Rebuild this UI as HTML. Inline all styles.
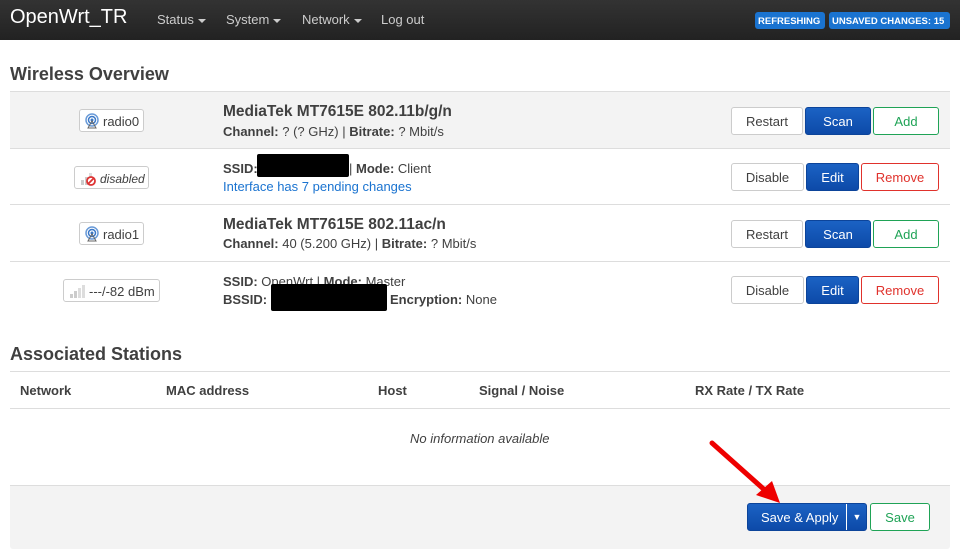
<!DOCTYPE html>
<html><head><meta charset="utf-8"><style>
*{box-sizing:border-box;margin:0;padding:0}
body{width:960px;height:560px;background:#fff;font-family:"Liberation Sans",sans-serif;color:#404040;font-size:13px;position:relative;overflow:hidden}
.a{position:absolute}
.nav{left:0;top:0;width:960px;height:40px;background:linear-gradient(#333,#222)}
.brand{left:10px;top:6px;color:#fff;font-size:20px}
.mi{top:12px;color:#ccc;font-size:13px}
.car{display:inline-block;width:0;height:0;border-left:4px solid transparent;border-right:4px solid transparent;border-top:4px solid #ccc;vertical-align:middle;margin-left:4px}
.badge{top:12px;height:17px;background:#1a73d0;color:#fff;font-size:9.5px;font-weight:bold;border-radius:3px;padding:4px 3px 0;white-space:nowrap}
h2{position:absolute;font-size:18px;font-weight:bold;color:#404040}
.row{left:10px;width:940px;border-top:1px solid #ddd}
.lbl{height:23px;border:1px solid #ccc;border-radius:3px;background:#fff;font-size:13px;padding:3px 4px 0 4px;white-space:nowrap}
.lbl svg{vertical-align:-3px;margin-right:3px}
.btn{height:28px;border-radius:3px;font-size:13px;text-align:center;padding-top:6px;border:1px solid #ccc;background:#fff;color:#404040}
.pri{background:linear-gradient(#1b62c4,#0d4aa8);border-color:#0c449a;color:#fff}
.pos{border-color:#1fa356;color:#1fa356}
.neg{border-color:#e0322c;color:#e0322c}
b{color:#404040}
.t{font-size:15.5px;font-weight:bold;color:#404040}
.th{font-weight:bold;top:383px;font-size:13px}
</style></head><body>
<div class="a nav"></div>
<div class="a brand">OpenWrt_TR</div>
<div class="a mi" style="left:157px">Status<span class="car"></span></div>
<div class="a mi" style="left:226px">System<span class="car"></span></div>
<div class="a mi" style="left:302px">Network<span class="car"></span></div>
<div class="a mi" style="left:381px">Log out</div>
<div class="a badge" style="left:755px;width:70px">REFRESHING</div>
<div class="a badge" style="left:829px;width:121px">UNSAVED CHANGES: 15</div>

<h2 style="left:10px;top:64px">Wireless Overview</h2>
<div class="a row" style="top:91px;height:58px;background:#f3f3f3"></div>
<div class="a row" style="top:148px;height:57px"></div>
<div class="a row" style="top:204px;height:58px"></div>
<div class="a row" style="top:261px;height:57px"></div>

<div class="a lbl" style="left:79px;top:109px;width:65px"><svg width="16" height="16"><circle cx="8" cy="7" r="6" fill="none" stroke="#6a9bd8" stroke-width="1.5"/><circle cx="8" cy="7" r="3.5" fill="none" stroke="#3a78c8" stroke-width="1.5"/><circle cx="8" cy="7" r="1.5" fill="#3a78c8"/><path d="M4 15 L8 8 L12 15 Z" fill="none" stroke="#666"/></svg>radio0</div>
<div class="a t" style="left:223px;top:103px">MediaTek MT7615E 802.11b/g/n</div>
<div class="a" style="left:223px;top:124px"><b>Channel:</b> ? (? GHz) | <b>Bitrate:</b> ? Mbit/s</div>
<div class="a btn" style="left:731px;top:107px;width:72px">Restart</div>
<div class="a btn pri" style="left:805px;top:107px;width:66px">Scan</div>
<div class="a btn pos" style="left:873px;top:107px;width:66px">Add</div>

<div class="a lbl" style="left:74px;top:166px;width:75px;font-style:italic;font-size:12px"><svg width="18" height="16"><rect x="2" y="10" width="3" height="5" fill="#ccc"/><rect x="6" y="7" width="3" height="8" fill="#ccc"/><rect x="10" y="3" width="3" height="12" fill="#ddd"/><circle cx="12" cy="11" r="4" fill="#fff" stroke="#d33" stroke-width="1.8"/><line x1="9.5" y1="13.5" x2="14.5" y2="8.5" stroke="#d33" stroke-width="1.8"/></svg>disabled</div>
<div class="a" style="left:223px;top:161px"><b>SSID:</b></div>
<div class="a" style="left:257px;top:154px;width:92px;height:23px;background:#000;border-radius:2px"></div>
<div class="a" style="left:349px;top:161px">| <b>Mode:</b> Client</div>
<div class="a" style="left:223px;top:179px;color:#1a73d0">Interface has 7 pending changes</div>
<div class="a btn" style="left:731px;top:163px;width:73px">Disable</div>
<div class="a btn pri" style="left:806px;top:163px;width:53px">Edit</div>
<div class="a btn neg" style="left:861px;top:163px;width:78px">Remove</div>

<div class="a lbl" style="left:79px;top:222px;width:65px"><svg width="16" height="16"><circle cx="8" cy="7" r="6" fill="none" stroke="#6a9bd8" stroke-width="1.5"/><circle cx="8" cy="7" r="3.5" fill="none" stroke="#3a78c8" stroke-width="1.5"/><circle cx="8" cy="7" r="1.5" fill="#3a78c8"/><path d="M4 15 L8 8 L12 15 Z" fill="none" stroke="#666"/></svg>radio1</div>
<div class="a t" style="left:223px;top:216px">MediaTek MT7615E 802.11ac/n</div>
<div class="a" style="left:223px;top:236px"><b>Channel:</b> 40 (5.200 GHz) | <b>Bitrate:</b> ? Mbit/s</div>
<div class="a btn" style="left:731px;top:220px;width:72px">Restart</div>
<div class="a btn pri" style="left:805px;top:220px;width:66px">Scan</div>
<div class="a btn pos" style="left:873px;top:220px;width:66px">Add</div>

<div class="a lbl" style="left:63px;top:279px;width:97px"><svg width="18" height="16"><rect x="2" y="11" width="3" height="4" fill="#ccc"/><rect x="6" y="8" width="3" height="7" fill="#ccc"/><rect x="10" y="5" width="3" height="10" fill="#ddd"/><rect x="14" y="2" width="3" height="13" fill="#ddd"/></svg>---/-82 dBm</div>
<div class="a" style="left:223px;top:274px"><b>SSID:</b> OpenWrt | <b>Mode:</b> Master</div>
<div class="a" style="left:223px;top:292px"><b>BSSID:</b></div>
<div class="a" style="left:271px;top:284px;width:116px;height:27px;background:#000;border-radius:2px"></div>
<div class="a" style="left:390px;top:292px"><b>Encryption:</b> None</div>
<div class="a btn" style="left:731px;top:276px;width:73px">Disable</div>
<div class="a btn pri" style="left:806px;top:276px;width:53px">Edit</div>
<div class="a btn neg" style="left:861px;top:276px;width:78px">Remove</div>

<h2 style="left:10px;top:344px">Associated Stations</h2>
<div class="a row" style="top:371px;height:38px;border-bottom:1px solid #ddd"></div>
<div class="a th" style="left:20px">Network</div>
<div class="a th" style="left:166px">MAC address</div>
<div class="a th" style="left:378px">Host</div>
<div class="a th" style="left:479px">Signal / Noise</div>
<div class="a th" style="left:695px">RX Rate / TX Rate</div>
<div class="a" style="left:410px;top:431px;font-style:italic">No information available</div>

<div class="a" style="left:10px;top:485px;width:940px;height:64px;background:#f3f3f3;border-top:1px solid #ddd;border-radius:0 0 3px 3px"></div>
<div class="a btn pri" style="left:747px;top:503px;width:120px;text-align:left;padding-left:13px">Save &amp; Apply<span style="position:absolute;left:98px;top:0;height:26px;border-left:1px solid #fff;width:21px;text-align:center;padding-top:8px;font-size:9px">▼</span></div>
<div class="a btn pos" style="left:870px;top:503px;width:60px">Save</div>

<svg class="a" style="left:700px;top:435px" width="90" height="70"><line x1="12" y1="8" x2="68" y2="58" stroke="#e00" stroke-width="5" stroke-linecap="round"/><polygon points="80,68 56,60 72,46" fill="#e00"/></svg>
</body></html>
